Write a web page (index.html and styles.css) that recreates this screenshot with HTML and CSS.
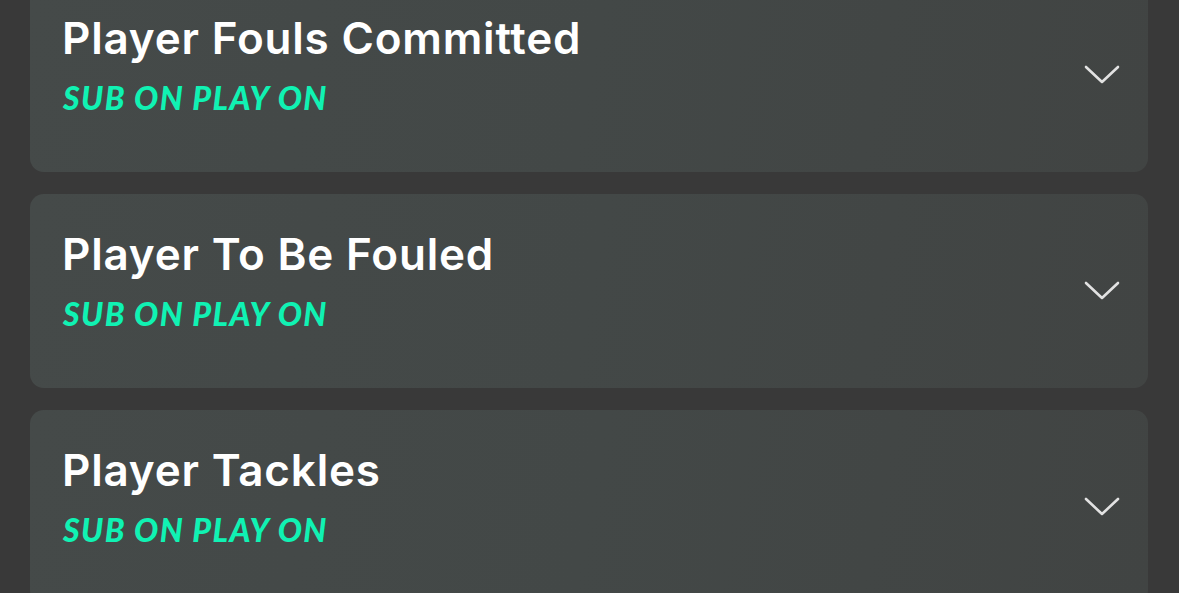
FILE: index.html
```html
<!DOCTYPE html>
<html lang="en">

<head>
    <meta charset="UTF-8">
    <meta name="viewport" content="width=device-width, initial-scale=1.0">
    <title>Player Markets</title>
    <link rel="stylesheet" href="styles.css">
</head>

<body>

    <div class="market-list">
        <div class="market-item">
            <div class="market-text">
                <h3>Player Fouls Committed</h3>
                <p class="market-tag">SUB ON PLAY ON</p>
            </div>
            <svg class="chevron" width="36" height="20" viewBox="0 0 36 20">
                <polyline points="2,2 18,17 34,2" />
            </svg>
        </div>

        <div class="market-item">
            <div class="market-text">
                <h3>Player To Be Fouled</h3>
                <p class="market-tag">SUB ON PLAY ON</p>
            </div>
            <svg class="chevron" width="36" height="20" viewBox="0 0 36 20">
                <polyline points="2,2 18,17 34,2" />
            </svg>
        </div>

        <div class="market-item">
            <div class="market-text">
                <h3>Player Tackles</h3>
                <p class="market-tag">SUB ON PLAY ON</p>
            </div>
            <svg class="chevron" width="36" height="20" viewBox="0 0 36 20">
                <polyline points="2,2 18,17 34,2" />
            </svg>
        </div>
    </div>

</body>

</html>
```

FILE: styles.css
```css
body {
    font-family: Inter, "Open Sans", Arial, sans-serif;
    background-color: #393939;
    color: white;
    margin: 0;
    padding: 0;
    overflow: hidden;
}

.market-list {
    display: flex;
    flex-direction: column;
    gap: 22px;
    margin-top: -22px;
    padding: 0 31px 0 30px;
}

.market-item {
    display: flex;
    align-items: center;
    justify-content: space-between;
    height: 194px;
    box-sizing: border-box;
    padding: 0 28px 0 32px;
    border-radius: 14px;
    background: linear-gradient(100deg, #454a49 0%, #434847 50%, #414443 100%);
}

.market-text {
    padding-bottom: 23px;
}

.market-item h3 {
    margin: 0;
    font-size: 44px;
    font-weight: 600;
    line-height: 52px;
    letter-spacing: 0.8px;
}

.market-tag {
    margin: 16px 0 0 1px;
    font-family: Lato, sans-serif;
    font-size: 32px;
    font-weight: 900;
    font-style: italic;
    line-height: 36px;
    letter-spacing: 1.4px;
    color: #10f2b3;
}

.chevron {
    display: block;
}

.chevron polyline {
    fill: none;
    stroke: #e2e2e2;
    stroke-width: 2.6;
    stroke-linecap: round;
    stroke-linejoin: round;
}
```
